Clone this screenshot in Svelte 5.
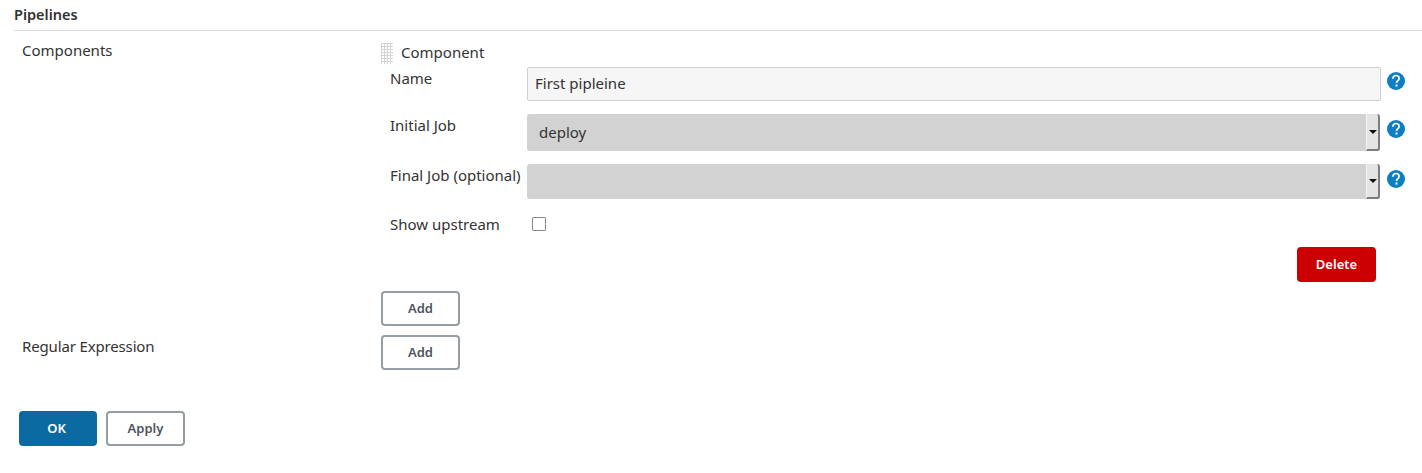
<script>
  const rows = [
    { label: 'Initial Job', value: 'deploy', cls: 'first' },
    { label: 'Final Job (optional)', value: '', cls: 'second' }
  ]
</script>

{#snippet help()}
  <svg class="help" viewBox="0 0 18 18" width="18" height="18" aria-hidden="true">
    <circle cx="9" cy="9" r="9" fill="#0b7fc1" />
    <path d="M5.900 6.700c0-2 1.300-3.200 3.200-3.200s3 1.200 3 2.900c0 1.300-.7 1.900-1.500 2.500-.8.600-1.100 1.100-1.100 2.200" fill="none" stroke="#fff" stroke-width="1.700" />
    <rect x="8.500" y="12.500" width="2" height="2.100" fill="#fff" />
  </svg>
{/snippet}

<div class="page">
  <h2>Pipelines</h2>

  <div class="section">
    <div class="label">Components</div>
    <div class="body">
      <div class="chunk">
        <div class="chunk-head">
          <span class="handle"></span>
          <span>Component</span>
        </div>

        <div class="row name-row">
          <div class="row-label">Name</div>
          <input class="text" value="First pipleine" />
          {@render help()}
        </div>

        {#each rows as row}
          <div class="row {row.cls}">
            <div class="row-label">{row.label}</div>
            <div class="select">
              <span class="value">{row.value}</span>
              <span class="arrow"><i></i></span>
            </div>
            {@render help()}
          </div>
        {/each}

        <div class="row check-row">
          <div class="row-label">Show upstream</div>
          <span class="check"></span>
        </div>

        <div class="delete-row">
          <button class="btn danger">Delete</button>
        </div>
      </div>
      <button class="btn add">Add</button>
    </div>
  </div>

  <div class="section regex">
    <div class="label">Regular Expression</div>
    <div class="body">
      <button class="btn add">Add</button>
    </div>
  </div>

  <div class="actions">
    <button class="btn primary">OK</button>
    <button class="btn">Apply</button>
  </div>
</div>

<style>
  :global(body) {
    margin: 0;
    background: #fff;
  }
  .page {
    font-family: "Noto Sans", "Open Sans", sans-serif;
    font-size: 15px;
    color: #333;
    height: 473px;
    overflow: hidden;
  }
  h2 {
    margin: 0 0 0 14px;
    height: 31px;
    box-sizing: border-box;
    padding-top: 5px;
    font-size: 14.500px;
    line-height: 19px;
    font-weight: 600;
    border-bottom: 1px solid #dcdcdc;
  }
  .section {
    display: grid;
    grid-template-columns: 381px 1fr;
  }
  .label {
    padding: 8px 0 0 22px;
    line-height: 22px;
  }
  .regex .label {
    letter-spacing: -0.15px;
  }
  .chunk-head {
    height: 36px;
    display: flex;
    align-items: flex-start;
    gap: 8px;
    line-height: 22px;
    padding-top: 10px;
    box-sizing: border-box;
  }
  .handle {
    width: 12px;
    height: 21px;
    margin-top: 2px;
    background-image:
      linear-gradient(#d4d4d4 1px, transparent 1px),
      linear-gradient(90deg, #d4d4d4 1px, transparent 1px);
    background-size: 3px 3px;
  }
  .row {
    display: flex;
    align-items: flex-start;
    padding-left: 9px;
  }
  .row-label {
    width: 137px;
    flex: none;
    line-height: 22px;
    white-space: nowrap;
  }
  .help {
    flex: none;
    margin-left: 6px;
  }
  .name-row {
    height: 47px;
  }
  .name-row .help {
    margin-top: 5px;
  }
  .text {
    width: 854px;
    height: 34px;
    box-sizing: border-box;
    flex: none;
    margin: 0;
    padding: 0 7px 2px;
    font: inherit;
    color: #333;
    background: #f6f6f6;
    border: 1px solid #cfcfcf;
    border-radius: 2px;
    outline: none;
  }
  .select {
    width: 853px;
    box-sizing: border-box;
    flex: none;
    display: flex;
    justify-content: space-between;
    align-items: center;
    padding-left: 12px;
    background: #d2d2d2;
    border-radius: 3px;
  }
  .value {
    margin-top: -2px;
  }
  .first {
    height: 50px;
  }
  .first .select {
    height: 37px;
  }
  .first .help {
    margin: 6px 0 0 7px;
  }
  .second {
    height: 50px;
  }
  .second .select {
    height: 35px;
  }
  .second .help {
    margin: 6px 0 0 7px;
  }
  .arrow {
    width: 14px;
    height: 100%;
    box-sizing: border-box;
    display: flex;
    align-items: center;
    justify-content: center;
    background: #e4e4e4;
    border-left: 1px solid #f4f4f4;
    border-right: 2px solid #7d7d7d;
    border-bottom: 2px solid #7d7d7d;
    border-radius: 0 3px 3px 0;
  }
  .arrow i {
    width: 0;
    height: 0;
    border-left: 4px solid transparent;
    border-right: 4px solid transparent;
    border-top: 4px solid #111;
  }
  .check-row {
    height: 33px;
  }
  .check-row .row-label {
    margin-top: -1px;
  }
  .check {
    width: 14px;
    height: 14px;
    margin: 3px 0 0 5px;
    box-sizing: border-box;
    border: 1px solid #8a8a8a;
    border-radius: 1px;
    background: #fff;
  }
  .delete-row {
    display: flex;
    justify-content: flex-end;
    height: 44px;
    width: 995px;
  }
  .btn {
    width: 79px;
    height: 35px;
    box-sizing: border-box;
    padding: 0 0 2px;
    font-family: inherit;
    font-size: 13px;
    font-weight: 600;
    color: #4d545d;
    background: #fff;
    border: 2px solid #959da5;
    border-radius: 4px;
    display: block;
  }
  .danger {
    background: #cc0003;
    border-color: #cc0003;
    color: #fff;
  }
  .primary {
    width: 78px;
    background: #0b6aa2;
    border-color: #0b6aa2;
    color: #fff;
    padding-right: 3px;
  }
  .regex {
    margin-top: 9px;
  }
  .regex .label {
    padding-top: 0;
  }
  .actions {
    display: flex;
    gap: 9px;
    padding: 41px 0 0 19px;
  }
</style>
